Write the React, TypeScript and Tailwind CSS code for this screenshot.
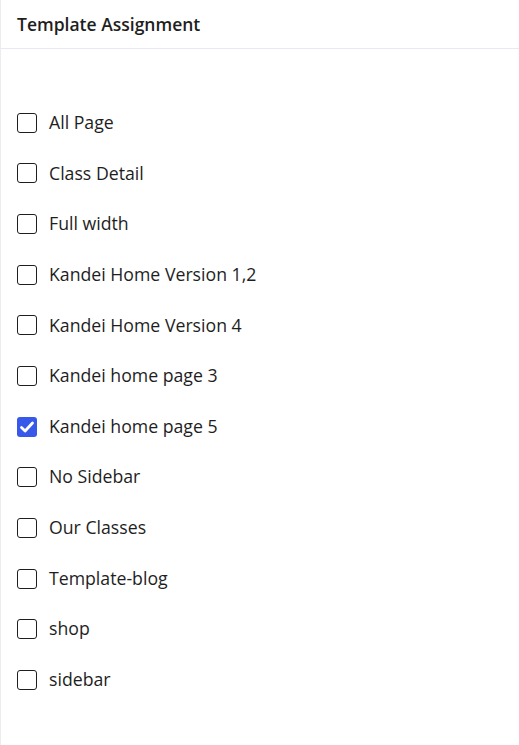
import { useState } from 'react'

const templates = [
  'All Page',
  'Class Detail',
  'Full width',
  'Kandei Home Version 1,2',
  'Kandei Home Version 4',
  'Kandei home page 3',
  'Kandei home page 5',
  'No Sidebar',
  'Our Classes',
  'Template-blog',
  'shop',
  'sidebar',
]

export default function App() {
  const [checked, setChecked] = useState<string[]>(['Kandei home page 5'])

  const toggle = (name: string) =>
    setChecked((prev) => (prev.includes(name) ? prev.filter((n) => n !== name) : [...prev, name]))

  return (
    <div
      className="h-[745px] w-[519px] overflow-hidden border-l border-[#ececec] bg-white text-[#1e1e1e]"
      style={{ fontFamily: '"Open Sans", "Noto Sans", sans-serif' }}
    >
      <div className="flex h-[49px] items-center border-b border-[#e8eaf3] px-4">
        <h2 className="text-[17.5px] font-semibold">Template Assignment</h2>
      </div>
      <ul className="pt-[48.5px]">
        {templates.map((name) => {
          const on = checked.includes(name)
          return (
            <li key={name} className="flex h-[50.65px] items-center gap-3 pl-4">
              <button
                type="button"
                onClick={() => toggle(name)}
                className={
                  on
                    ? 'flex h-5 w-5 items-center justify-center rounded-[3px] bg-[#3858e9]'
                    : 'h-5 w-5 rounded-[3px] border-[1.5px] border-[#1e1e1e]'
                }
              >
                {on && (
                  <svg viewBox="0 0 20 20" className="h-5 w-5" fill="none">
                    <path d="M4.5 10.5l3.6 3.5L15.5 6" stroke="white" strokeWidth="2.8" strokeLinecap="round" strokeLinejoin="round" />
                  </svg>
                )}
              </button>
              <span className="text-[17.7px] leading-none">{name}</span>
            </li>
          )
        })}
      </ul>
    </div>
  )
}
